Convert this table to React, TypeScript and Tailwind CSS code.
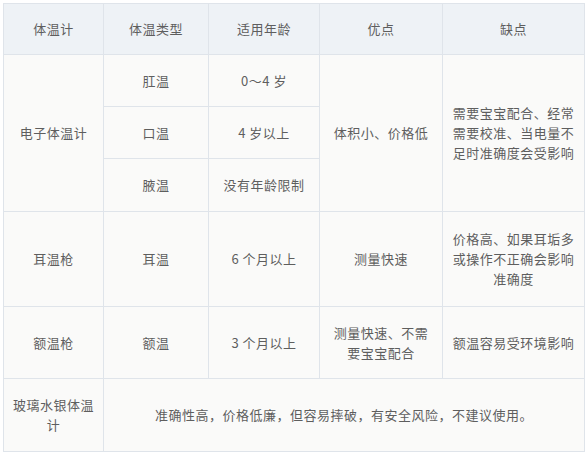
// Thermometer comparison table

const cell = "border border-[#dfe4ea] text-center align-middle px-[9px]";

export default function App() {
  return (
    <div
      className="w-[587px] h-[453px] bg-white pt-[3px] pl-[3px]"
      style={{ fontFamily: '"Noto Sans CJK SC", "Noto Sans", sans-serif' }}
    >
      <table className="border-collapse table-fixed w-[581px] text-[13px] leading-[20px] tracking-[0.5px] text-[#5e5e5e]">
        <colgroup>
          <col className="w-[100px]" />
          <col className="w-[105px]" />
          <col className="w-[111px]" />
          <col className="w-[123px]" />
          <col className="w-[142px]" />
        </colgroup>
        <thead>
          <tr className="h-[51px] bg-[#eef2f6]">
            <th className={`${cell} font-normal`}>体温计</th>
            <th className={`${cell} font-normal`}>体温类型</th>
            <th className={`${cell} font-normal`}>适用年龄</th>
            <th className={`${cell} font-normal`}>优点</th>
            <th className={`${cell} font-normal`}>缺点</th>
          </tr>
        </thead>
        <tbody className="bg-[#fafaf9]">
          <tr className="h-[52px]">
            <td className={cell} rowSpan={3}>电子体温计</td>
            <td className={cell}>肛温</td>
            <td className={cell}>0～4 岁</td>
            <td className={cell} rowSpan={3}>体积小、价格低</td>
            <td className={cell} rowSpan={3}>需要宝宝配合、经常需要校准、当电量不足时准确度会受影响</td>
          </tr>
          <tr className="h-[52px]">
            <td className={cell}>口温</td>
            <td className={cell}>4 岁以上</td>
          </tr>
          <tr className="h-[53px]">
            <td className={cell}>腋温</td>
            <td className={cell}>没有年龄限制</td>
          </tr>
          <tr className="h-[95px]">
            <td className={cell}>耳温枪</td>
            <td className={cell}>耳温</td>
            <td className={cell}>6 个月以上</td>
            <td className={cell}>测量快速</td>
            <td className={cell}>价格高、如果耳垢多或操作不正确会影响准确度</td>
          </tr>
          <tr className="h-[72px]">
            <td className={cell}>额温枪</td>
            <td className={cell}>额温</td>
            <td className={cell}>3 个月以上</td>
            <td className={cell}>测量快速、不需要宝宝配合</td>
            <td className={cell}>额温容易受环境影响</td>
          </tr>
          <tr className="h-[73px]">
            <td className={cell}>玻璃水银体温计</td>
            <td className={cell} colSpan={4}>准确性高，价格低廉，但容易摔破，有安全风险，不建议使用。</td>
          </tr>
        </tbody>
      </table>
    </div>
  );
}
